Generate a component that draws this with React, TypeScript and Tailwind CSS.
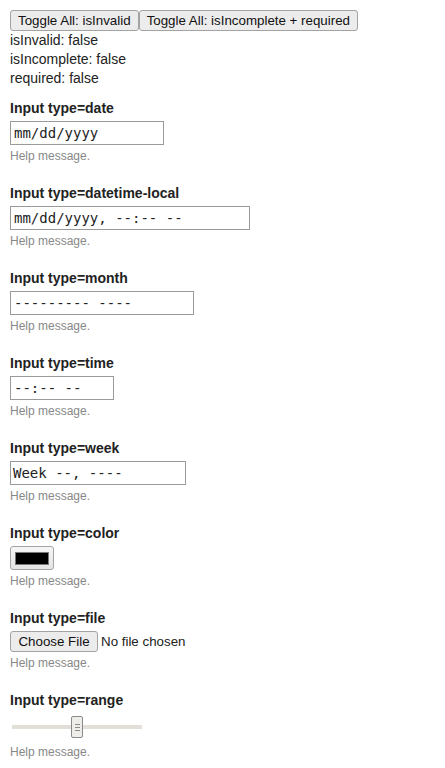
const sans = { fontFamily: '"Liberation Sans", Arial, sans-serif' };

const Field = ({ label, children }: { label: string; children: React.ReactNode }) => (
  <div className="mt-[20px] first:mt-[11px]">
    <div className="text-[14px] font-bold leading-[19px] text-[#222]">{label}</div>
    <div className="mt-[3px]">{children}</div>
    <div className="mt-[3px] text-[12px] leading-[16px] text-[#888]">Help message.</div>
  </div>
);

const FakeInput = ({ width, text, pad = 'pl-[3px]' }: { width: string; text: string; pad?: string }) => (
  <div
    className={`flex h-[24px] items-center border border-[#9a9a9a] bg-white ${pad} ${width} whitespace-pre font-['DejaVu_Sans_Mono',monospace] text-[14px] text-[#222]`}
  >
    {text}
  </div>
);

const NativeButton = ({ children, className = '' }: { children: React.ReactNode; className?: string }) => (
  <button
    type="button"
    className={`h-[21px] rounded-[3px] border border-[#a3a3a3] bg-[#ececec] px-[7px] text-[13.333px] leading-[15px] text-[#111] ${className}`}
  >
    {children}
  </button>
);

export default function App() {
  return (
    <div className="min-h-screen bg-white p-[10px] text-[14px] text-[#222]" style={sans}>
      <div className="flex">
        <NativeButton>Toggle All: isInvalid</NativeButton>
        <NativeButton>Toggle All: isIncomplete + required</NativeButton>
      </div>
      <div className="leading-[19px]">
        <div>isInvalid: false</div>
        <div>isIncomplete: false</div>
        <div>required: false</div>
      </div>

      <div>
        <Field label="Input type=date">
          <FakeInput width="w-[154px]" text="mm/dd/yyyy" />
        </Field>
        <Field label="Input type=datetime-local">
          <FakeInput width="w-[240px]" text="mm/dd/yyyy, --:-- --" />
        </Field>
        <Field label="Input type=month">
          <FakeInput width="w-[184px]" text="--------- ----" />
        </Field>
        <Field label="Input type=time">
          <FakeInput width="w-[104px]" text="--:-- --" />
        </Field>
        <Field label="Input type=week">
          <FakeInput width="w-[176px]" text="Week --, ----" pad="pl-[2px]" />
        </Field>
        <Field label="Input type=color">
          <button
            type="button"
            className="flex h-[24px] w-[44px] items-center justify-center rounded-[3px] border border-[#a3a3a3] bg-gradient-to-b from-[#f6f6f6] to-[#e4e4e4]"
          >
            <span className="block h-[13px] w-[34px] border border-[#777] bg-black" />
          </button>
        </Field>
        <Field label="Input type=file">
          <div className="flex h-[21px] items-center">
            <NativeButton className="w-[88px] px-0">Choose File</NativeButton>
            <span className="ml-[3px] text-[13.333px] text-[#222]">No file chosen</span>
          </div>
        </Field>
        <Field label="Input type=range">
          <div className="ml-[2px] flex h-[28px] w-[130px] items-center">
            <div className="h-[4px] w-[59px] bg-[#e2ded8]" />
            <div className="flex h-[22px] w-[12px] flex-col items-center justify-center gap-[2px] rounded-[2px] border border-[#8a8a8a] bg-[#efedea]">
              <span className="block h-px w-[5px] bg-[#8a8a8a]" />
              <span className="block h-px w-[5px] bg-[#8a8a8a]" />
              <span className="block h-px w-[5px] bg-[#8a8a8a]" />
            </div>
            <div className="h-[4px] flex-1 bg-[#e2ded8]" />
          </div>
        </Field>
      </div>
    </div>
  );
}
